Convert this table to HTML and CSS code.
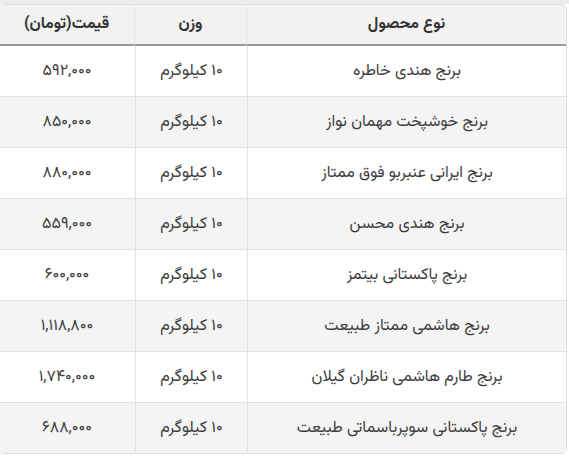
FILE: index.html
```html
<!DOCTYPE html>
<html lang="fa" dir="rtl">
<head>
<meta charset="utf-8">
<title>قیمت برنج</title>
<link rel="stylesheet" href="styles.css">
</head>
<body>
<div class="top-strip"></div>
<div class="wrap">
<table class="price-table">
<colgroup>
<col class="c-name">
<col class="c-weight">
<col class="c-price">
</colgroup>
<thead>
<tr><th>نوع محصول</th><th>وزن</th><th>قیمت(تومان)</th></tr>
</thead>
<tbody>
<tr><td>برنج هندی خاطره</td><td>۱۰ کیلوگرم</td><td>۵۹۲,۰۰۰</td></tr>
<tr><td>برنج خوشپخت مهمان نواز</td><td>۱۰ کیلوگرم</td><td>۸۵۰,۰۰۰</td></tr>
<tr><td>برنج ایرانی عنبربو فوق ممتاز</td><td>۱۰ کیلوگرم</td><td>۸۸۰,۰۰۰</td></tr>
<tr><td>برنج هندی محسن</td><td>۱۰ کیلوگرم</td><td>۵۵۹,۰۰۰</td></tr>
<tr><td>برنج پاکستانی بیتمز</td><td>۱۰ کیلوگرم</td><td>۶۰۰,۰۰۰</td></tr>
<tr><td>برنج هاشمی ممتاز طبیعت</td><td>۱۰ کیلوگرم</td><td>۱,۱۱۸,۸۰۰</td></tr>
<tr><td>برنج طارم هاشمی ناظران گیلان</td><td>۱۰ کیلوگرم</td><td>۱,۷۴۰,۰۰۰</td></tr>
<tr><td>برنج پاکستانی سوپرباسماتی طبیعت</td><td>۱۰ کیلوگرم</td><td>۶۸۸,۰۰۰</td></tr>
</tbody>
</table>
</div>
</body>
</html>
```
FILE: styles.css
```css
html, body {
  margin: 0;
  padding: 0;
  background: #ffffff;
}
body {
  width: 569px;
  font-family: "Vazirmatn", "Vazir", "Noto Sans Arabic", "DejaVu Sans", sans-serif;
  color: #3d3d3d;
}
.top-strip {
  height: 4px;
  background: #ececec;
}
.wrap {
  padding-right: 2px;
  direction: rtl;
}
.price-table {
  width: 567px;
  border-collapse: separate;
  border-spacing: 0;
  border: 1px solid #dedede;
  border-radius: 6px;
  overflow: hidden;
  table-layout: fixed;
  font-size: 16px;
}
.c-name { width: 319px; }
.c-weight { width: 112px; }
.c-price { width: 136px; }
.price-table th {
  height: 39px;
  background: #f2f2f2;
  font-weight: bold;
  color: #333;
  border-bottom: 2px solid #9a9a9a;
  padding: 0;
  text-align: center;
  vertical-align: middle;
}
.price-table td {
  height: 50px;
  padding: 0;
  text-align: center;
  vertical-align: middle;
  border-top: 1px solid #e2e2e2;
  border-left: 1px solid #e2e2e2;
  background: #ffffff;
}
.price-table th + th {
  border-right: 1px solid #e6e6e6;
}
.price-table td:last-child {
  border-left: none;
}
.price-table tbody tr:first-child td {
  border-top: none;
}
.price-table tbody tr:nth-child(even) td {
  background: #f4f4f4;
}
```
